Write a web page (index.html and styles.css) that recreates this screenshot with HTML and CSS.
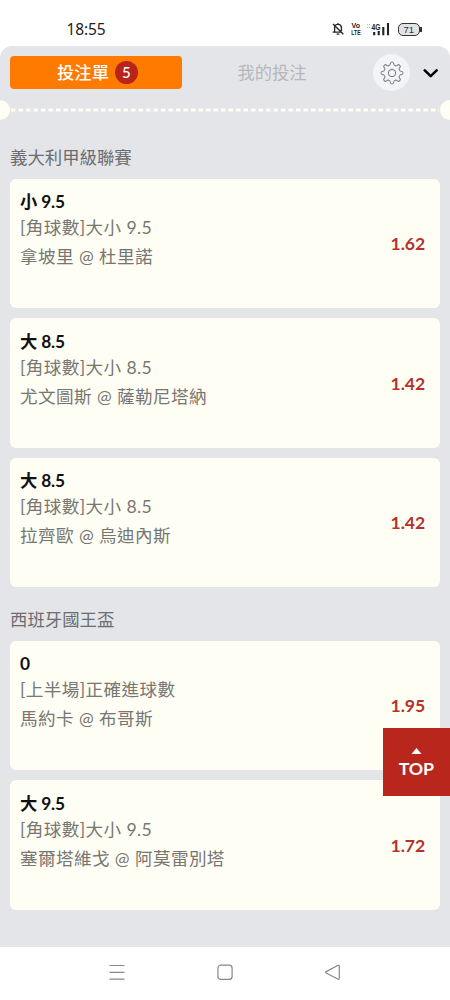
FILE: index.html
```html
<!DOCTYPE html>
<html lang="zh-Hant">
<head>
<meta charset="utf-8">
<meta name="viewport" content="width=device-width, initial-scale=1">
<title>投注單</title>
<link rel="stylesheet" href="styles.css">
</head>
<body>
<div class="phone">
  <header class="status">
    <span class="clock">18:55</span>
    <div class="status-icons">
      <svg class="bell" width="12" height="14" viewBox="0 0 12 14" fill="none" stroke="#222" stroke-width="1.3">
        <path d="M2.6 9.8V6.2A3.4 3.4 0 0 1 9.4 5.4V9M.6 10.2H9.5M4.6 12.2H7.4M6 1V2.6M1 2L11.4 12.2"/>
      </svg>
      <svg class="volte" width="12" height="18" viewBox="0 0 12 18">
        <text x="1.6" y="8" textLength="8.5" lengthAdjust="spacingAndGlyphs">Vo</text>
        <text x="1.2" y="15.3" textLength="9.4" lengthAdjust="spacingAndGlyphs">LTE</text>
      </svg>
      <svg class="signal" width="24" height="14" viewBox="0 0 24 14">
        <path d="M1 2.5H4M1 5.5H4" stroke="#bbb" stroke-dasharray="1 1"/>
        <text class="net" x="5.5" y="7.6" textLength="9" lengthAdjust="spacingAndGlyphs">4G</text>
        <path d="M8.2 10V13.2M12.7 9V13.2M17.3 5V13.2M22 1V13.2" stroke="#222" stroke-width="2.1"/>
      </svg>
      <div class="battery">71</div>
    </div>
  </header>

  <main class="sheet">
    <nav class="tabs">
      <div class="tab tab-active">投注單<span class="count">5</span></div>
      <div class="tab">我的投注</div>
      <div class="gear">
        <svg width="26" height="26" viewBox="-13 -13 26 26" fill="none" stroke="#777" stroke-width="1">
          <defs><path id="tooth" d="M-3.2-7.7Q-2-7.2-1.8-8.6L-1.5-10.2Q-1.3-10.8-.7-10.8H.7Q1.3-10.8 1.5-10.2L1.8-8.6Q2-7.2 3.2-7.7"/></defs>
          <use href="#tooth"/><use href="#tooth" transform="rotate(45)"/>
          <use href="#tooth" transform="rotate(90)"/><use href="#tooth" transform="rotate(135)"/>
          <use href="#tooth" transform="rotate(180)"/><use href="#tooth" transform="rotate(225)"/>
          <use href="#tooth" transform="rotate(270)"/><use href="#tooth" transform="rotate(315)"/>
          <circle r="3.7"/>
        </svg>
      </div>
      <svg class="chevron" width="16" height="10" viewBox="0 0 16 10" fill="none" stroke="#000" stroke-width="2.6" stroke-linecap="round" stroke-linejoin="round"><path d="M1.8 2.4L7.7 8.1L13.6 2.4"/></svg>
    </nav>
    <div class="perforation">
      <i class="notch"></i>
      <svg width="430" height="4" viewBox="0 0 430 4"><path d="M1 2H429" stroke="#fffef5" stroke-width="3" stroke-dasharray="4.5 3"/></svg>
      <i class="notch"></i>
    </div>

    <section class="league">
      <h2>義大利甲級聯賽</h2>
      <article class="bet">
        <div class="info"><h3>小 9.5</h3><p class="market">[角球數]大小 9.5</p><p class="match">拿坡里 @ 杜里諾</p></div>
        <span class="odds">1.62</span>
      </article>
      <article class="bet">
        <div class="info"><h3>大 8.5</h3><p class="market">[角球數]大小 8.5</p><p class="match">尤文圖斯 @ 薩勒尼塔納</p></div>
        <span class="odds">1.42</span>
      </article>
      <article class="bet">
        <div class="info"><h3>大 8.5</h3><p class="market">[角球數]大小 8.5</p><p class="match">拉齊歐 @ 烏迪內斯</p></div>
        <span class="odds">1.42</span>
      </article>
    </section>
    <section class="league">
      <h2>西班牙國王盃</h2>
      <article class="bet">
        <div class="info"><h3>0</h3><p class="market">[上半場]正確進球數</p><p class="match">馬約卡 @ 布哥斯</p></div>
        <span class="odds">1.95</span>
      </article>
      <article class="bet">
        <div class="info"><h3>大 9.5</h3><p class="market">[角球數]大小 9.5</p><p class="match">塞爾塔維戈 @ 阿莫雷別塔</p></div>
        <span class="odds">1.72</span>
      </article>
    </section>
  </main>

  <div class="top">
    <svg width="11" height="6" viewBox="0 0 11 6"><path d="M5.5 0L10.5 6H.5Z" fill="#fff"/></svg>
    <span>TOP</span>
  </div>

  <footer class="navbar">
    <svg width="18" height="18" viewBox="0 0 18 18" fill="none" stroke="#888" stroke-width="1.2"><path d="M1.5 2.5H16.5M1.5 9.3H16.5M1.5 16.2H16.5"/></svg>
    <svg width="18" height="18" viewBox="0 0 18 18" fill="none" stroke="#888" stroke-width="1.2"><rect x="1.9" y="2.2" width="14.2" height="14.2" rx="3"/></svg>
    <svg width="18" height="18" viewBox="0 0 18 18" fill="none" stroke="#888" stroke-width="1.2" stroke-linejoin="round"><path d="M13.7 2.5Q15.3 1.8 15.3 3.3V15.3Q15.3 16.8 13.7 16L2.2 10Q1 9.3 2.2 8.6Z"/></svg>
  </footer>
</div>
</body>
</html>
```

FILE: styles.css
```css
* { box-sizing: border-box; }
body, h2, h3, p { margin: 0; }
body {
  background: #fff;
  font-family: Lato, "Noto Sans CJK TC", sans-serif;
}
.phone {
  position: relative;
  display: flex;
  flex-direction: column;
  width: 450px;
  height: 1000px;
  overflow: hidden;
}
.status {
  display: flex;
  align-items: center;
  justify-content: space-between;
  height: 46px;
  padding: 12px 30px 0 66.5px;
}
.clock {
  font: 15.5px/20px "Noto Sans", sans-serif;
  letter-spacing: -0.1px;
  color: #222;
}
.status-icons { display: flex; align-items: center; }
.volte {
  margin: 0 4px 0 6px;
  font: bold 6.4px "Liberation Sans", sans-serif;
  fill: #222;
}
.net { font: bold 8.5px "Liberation Sans", sans-serif; fill: #222; }
.battery {
  position: relative;
  width: 22.5px;
  height: 13px;
  margin-left: 8px;
  border: 1.4px solid #333;
  border-radius: 5px;
  background: #e3e3e3;
  font: 9.5px/11.5px "Liberation Sans", sans-serif;
  text-align: center;
  color: #333;
}
.battery::after {
  content: "";
  position: absolute;
  right: -3px;
  top: 3px;
  width: 2px;
  height: 5px;
  background: #333;
}
.sheet {
  flex: 1;
  background: #e4e5e9;
  border-radius: 12px 12px 0 0;
}
.tabs {
  display: flex;
  align-items: center;
  height: 53px;
  padding-left: 10px;
}
.tab {
  display: flex;
  align-items: center;
  justify-content: center;
  width: 180px;
  height: 33px;
  font-size: 17.3px;
  line-height: 33px;
  color: #b6b7bb;
}
.tab-active {
  width: 172px;
  gap: 6px;
  padding-left: 3px;
  border-radius: 4px;
  background: #ff7a00;
  color: #fff;
  font-weight: 500;
}
.count {
  width: 23px;
  height: 23px;
  border-radius: 50%;
  background: #b9231a;
  font-size: 15px;
  line-height: 23px;
  text-align: center;
}
.gear {
  display: flex;
  align-items: center;
  justify-content: center;
  width: 37px;
  height: 37px;
  margin-left: 11px;
  border-radius: 50%;
  background: #f3f4f8;
}
.chevron { margin-left: 13px; }
.perforation {
  display: flex;
  align-items: center;
  justify-content: space-between;
  height: 20px;
  margin: 0 -10px;
  padding-top: 1px;
}
.perforation svg { margin-top: 1px; }
.notch {
  width: 20px;
  height: 20px;
  border-radius: 50%;
  background: #fffef5;
}
.league {
  display: flex;
  flex-direction: column;
  gap: 10px;
  padding: 17.7px 10px 0;
}
.league + .league { padding-top: 11.4px; }
.league h2 {
  height: 32px;
  font-size: 17.4px;
  line-height: 42px;
  font-weight: 400;
  color: #6c6d70;
}
.bet {
  display: flex;
  align-items: center;
  justify-content: space-between;
  height: 129.6px;
  padding: 0 15px 0 10px;
  border-radius: 6px;
  background: #fffef5;
}
.info { align-self: flex-start; padding-top: 10.5px; }
.bet h3 {
  font-size: 17.3px;
  line-height: 25px;
  font-weight: 700;
  letter-spacing: -0.15px;
  color: #111;
}
.market, .match {
  font-size: 17.6px;
  letter-spacing: 0.4px;
  line-height: 27px;
  color: #777671;
}
.match { line-height: 32px; }
.odds { font-size: 17.6px; font-weight: 700; letter-spacing: -0.1px; color: #b43229; }
.top {
  position: absolute;
  right: 0;
  top: 728px;
  display: flex;
  flex-direction: column;
  align-items: center;
  width: 67.5px;
  height: 68px;
  padding-top: 20px;
  background: #b9261c;
  color: #fff;
  font-size: 17.8px;
  font-weight: 700;
  letter-spacing: -0.2px;
  line-height: 28px;
}
.navbar {
  display: flex;
  justify-content: center;
  gap: 90px;
  height: 53.5px;
  padding-top: 16px;
  background: #fff;
}
```
